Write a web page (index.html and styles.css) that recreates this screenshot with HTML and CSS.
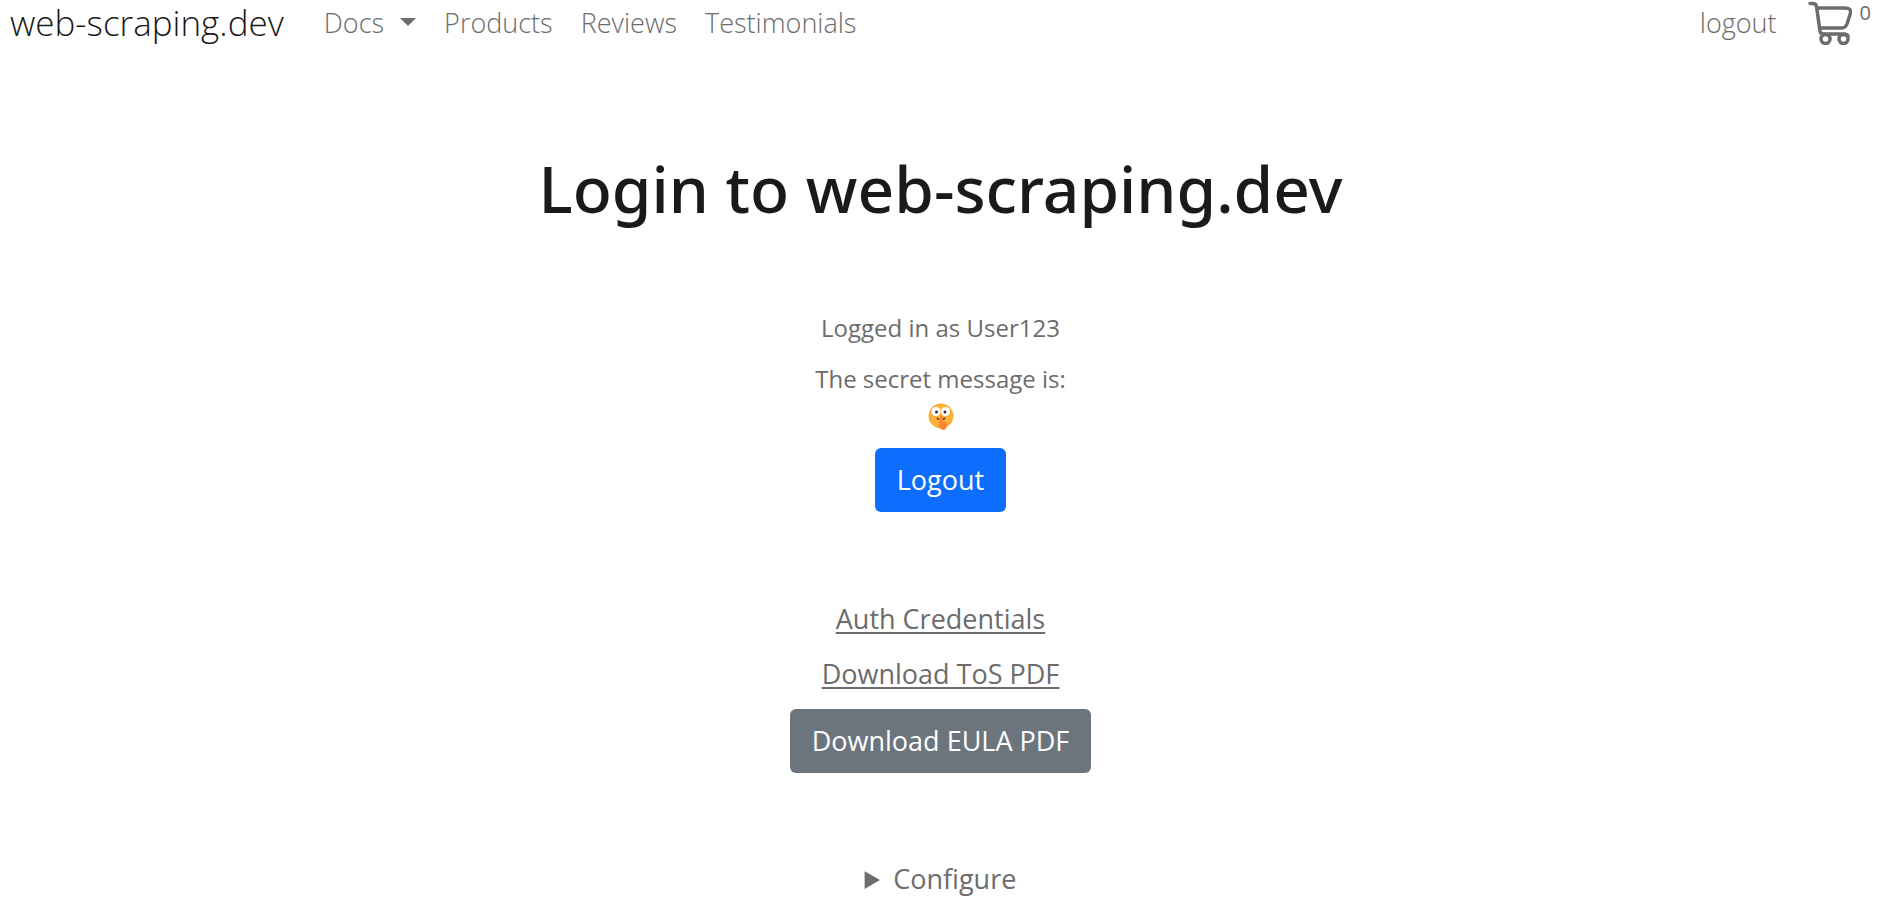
FILE: index.html
```html
<!DOCTYPE html>
<html lang="en">
<head>
    <meta charset="UTF-8">
    <meta name="viewport" content="width=device-width, initial-scale=1.0">
    <title>web-scraping.dev</title>
    <link rel="stylesheet" href="styles.css">
</head>
<body>
    <nav class="navbar">
        <a class="brand" href="#">web-scraping.dev</a>
        <div class="nav-links">
            <a class="nav-link dropdown-toggle" href="#">Docs</a>
            <a class="nav-link" href="#">Products</a>
            <a class="nav-link" href="#">Reviews</a>
            <a class="nav-link" href="#">Testimonials</a>
        </div>
        <div class="nav-user">
            <a class="nav-link" href="#">logout</a>
            <a class="cart" href="#" aria-label="Cart">
                <svg class="cart-icon" viewBox="0 0 44 44" fill="none" stroke="currentColor" stroke-width="3.500" stroke-linecap="round" stroke-linejoin="round">
                    <path d="M2 2.500H5Q8 2.500 8.500 5.500L12 30Q12.500 33 15.500 33"/>
                    <path d="M9.500 7H37Q43.500 7 42.500 12L39 23Q37.500 27 33.500 27H12.500"/>
                    <path d="M14 33H36.500Q39 33 40 35"/>
                    <circle cx="17.500" cy="38" r="4.500"/>
                    <circle cx="35.500" cy="38" r="4.500"/>
                </svg>
                <span class="cart-count">0</span>
            </a>
        </div>
    </nav>

    <main class="container">
        <h1>Login to web-scraping.dev</h1>

        <section class="secret">
            <p>Logged in as User123</p>
            <div>The secret message is:</div>
            <div class="emoji">
                <svg viewBox="0 0 26 28" role="img" aria-label="Shushing face">
                    <circle cx="13" cy="13" r="12.500" fill="#fbb03b"/>
                    <circle cx="8" cy="8.500" r="4.500" fill="#fff"/>
                    <circle cx="17.500" cy="8.500" r="4.500" fill="#fff"/>
                    <circle cx="8.500" cy="9" r="1.500" fill="#402a32"/>
                    <circle cx="17" cy="9" r="1.500" fill="#402a32"/>
                    <path d="M9 15Q10 16.500 11 16M15 16Q16 16.500 17 15" fill="none" stroke="#54302f" stroke-width="1.500"/>
                    <path d="M12 16Q12 13 13.500 13T15 16V19Q19 18 19 22.500Q18 27 15 27Q11 26 11 21Z" fill="#ff822d"/>
                </svg>
            </div>
            <button class="btn btn-primary" type="button">Logout</button>
        </section>

        <section class="downloads">
            <a href="#">Auth Credentials</a>
            <a href="#">Download ToS PDF</a>
            <button class="btn btn-secondary" type="button">Download EULA PDF</button>
        </section>

        <details>
            <summary>Configure</summary>
        </details>
    </main>
</body>
</html>
```

FILE: styles.css
```css
* {
    box-sizing: border-box;
}
body {
    margin: 0;
    background: #fff;
    color: #6c6c6c;
    font-family: "Segoe UI", "Open Sans", "Noto Sans", sans-serif;
    font-size: 27px;
    line-height: 40px;
}
a {
    color: inherit;
}
.navbar {
    display: flex;
    align-items: center;
    height: 46px;
    padding: 0 10px;
    font-weight: 300;
}
.navbar a {
    text-decoration: none;
}
.brand {
    margin-right: 40px;
    color: #1a1a1a;
    font-size: 35px;
}
.nav-links {
    display: flex;
    gap: 28px;
}
.dropdown-toggle::after {
    content: "";
    display: inline-block;
    margin-left: 16px;
    border-top: 8px solid;
    border-right: 8px solid transparent;
    border-left: 8px solid transparent;
    vertical-align: 7px;
}
.nav-user {
    display: flex;
    align-items: center;
    gap: 31px;
    margin-left: auto;
}
.cart {
    display: flex;
    gap: 8px;
}
.cart-icon {
    width: 44px;
    height: 44px;
}
.cart-count {
    font-size: 20px;
    font-weight: 400;
    line-height: 24px;
}
.container {
    display: flex;
    flex-direction: column;
    align-items: center;
    padding: 0 16px;
    text-align: center;
}
h1 {
    margin: 99px 0 76px;
    color: #1a1a1a;
    font-family: "Segoe UI", "Noto Sans", "Open Sans", sans-serif;
    font-size: 64px;
    font-weight: 500;
    line-height: 88px;
}
.secret {
    margin-bottom: 87px;
    font-size: 24px;
    line-height: 38px;
}
.secret p {
    margin: 0 0 13px;
}
.emoji {
    display: flex;
    justify-content: center;
    align-items: center;
    height: 38px;
    margin-bottom: 12px;
}
.emoji svg {
    width: 26px;
    height: 28px;
}
.btn {
    padding: 12px 22px;
    border: 0;
    border-radius: 6px;
    color: #fff;
    font: inherit;
    font-size: 27px;
    line-height: 40px;
    cursor: pointer;
}
.btn-primary {
    background: #0d6efd;
}
.btn-secondary {
    background: #6c757d;
}
.downloads {
    display: flex;
    flex-direction: column;
    align-items: center;
    gap: 15px;
    margin-bottom: 86px;
}
.downloads a {
    text-decoration-thickness: 2px;
    text-underline-offset: 3px;
}
summary {
    cursor: pointer;
}
```
